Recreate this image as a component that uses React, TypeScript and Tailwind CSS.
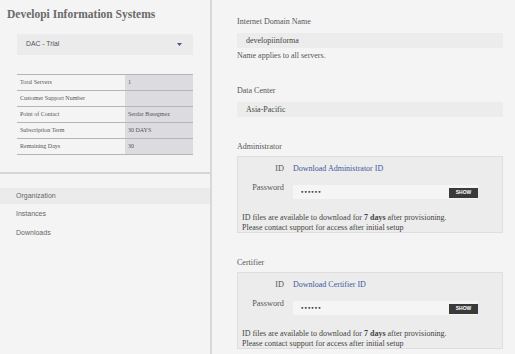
import React from 'react'

const serif = { fontFamily: '"Liberation Serif", "Times New Roman", serif' }
const sans = { fontFamily: '"Liberation Sans", Arial, sans-serif' }

const rows: [string, string][] = [
  ['Total Servers', '1'],
  ['Customer Support Number', ''],
  ['Point of Contact', 'Serdar Basegmez'],
  ['Subscription Term', '30 DAYS'],
  ['Remaining Days', '30'],
]

function Field({ label, value, note }: { label: string; value: string; note?: string }) {
  return (
    <div>
      <div className="text-[8px] leading-[10px] text-[#555]">{label}</div>
      <div className="mt-[6px] h-[15px] bg-[#ececec] pl-[9px] text-[8px] leading-[15px] text-[#444]">{value}</div>
      {note && <div className="mt-[3px] text-[8px] leading-[10px] text-[#555]">{note}</div>}
    </div>
  )
}

function IdBox({ title, link }: { title: string; link: string }) {
  return (
    <div>
      <div className="text-[8px] leading-[10px] text-[#555]">{title}</div>
      <div className="mt-[4px] h-[77px] border border-[#dedede] bg-[#ececec] pt-[6px] pl-[4px] pr-[24px]">
        <div className="flex items-center h-[12px] text-[8px]">
          <span className="w-[42px] text-right text-[8.3px] text-[#555]">ID</span>
          <span className="ml-[9px] text-[#3d5a9e]">{link}</span>
        </div>
        <div className="mt-[10px] flex items-start text-[8px]">
          <span className="-mt-[2px] w-[42px] text-right text-[8.3px] leading-[10px] text-[#555]">Password</span>
          <div className="ml-[9px] flex h-[14px] flex-1 items-center justify-between bg-[#f5f5f5] pl-[8px]">
            <span className="text-[7px] font-bold tracking-[1px] text-[#333]">••••••</span>
            <span className="mt-[2px] flex h-[10px] w-[29px] items-center justify-center bg-[#3a3a3a] text-[5px] font-bold text-white" style={sans}>SHOW</span>
          </div>
        </div>
        <div className="mt-[14px] text-[8px] leading-[10px] text-[#444]">
          ID files are available to download for <b>7 days</b> after provisioning.<br />
          Please contact support for access after initial setup
        </div>
      </div>
    </div>
  )
}

export default function App() {
  return (
    <div className="flex h-[354px] w-[515px] overflow-hidden bg-[#f4f4f4]" style={serif}>
      <aside className="w-[212px] shrink-0 border-r-2 border-[#d8d8d8]">
        <h1 className="pl-[7px] pt-[6px] text-[11.5px] font-bold leading-[16px] text-[#6a6a6a]">Developi Information Systems</h1>
        <div className="mx-[17px] mt-[12px] flex h-[21px] items-center justify-between bg-[#ebebeb] pl-[9px] pr-[11px] text-[6.8px] text-[#555]" style={sans}>
          <span>DAC - Trial</span>
          <svg width="5" height="3" viewBox="0 0 5 3"><path d="M0 0h5L2.5 3z" fill="#4a5a7a" /></svg>
        </div>
        <div className="mx-[17px] mt-[19px] border-b border-[#b5b5b5]">
          {rows.map(([k, v]) => (
            <div key={k} className="flex h-[16px] border-t border-[#b5b5b5] text-[6px] text-[#555]">
              <div className="flex w-[108px] items-center pl-[3px]">{k}</div>
              <div className="flex flex-1 items-center bg-[#dcdce0] pl-[3px]">{v}</div>
            </div>
          ))}
        </div>
        <div className="mt-[17px] h-[2px] bg-[#d6d6d6]" />
        <nav className="mt-[14px] text-[7px] text-[#666]" style={sans}>
          <div className="flex h-[16px] items-center bg-[#ebebeb] pl-[16px]">Organization</div>
          <div className="flex h-[21px] items-center pl-[16px]">Instances</div>
          <div className="flex h-[17px] items-center pl-[16px]">Downloads</div>
        </nav>
      </aside>
      <main className="flex-1 pl-[25px] pr-[12px] pt-[17px]">
        <Field label="Internet Domain Name" value="developiinforma" note="Name applies to all servers." />
        <div className="mt-[25px]">
          <Field label="Data Center" value="Asia-Pacific" />
        </div>
        <div className="mt-[25px]">
          <IdBox title="Administrator" link="Download Administrator ID" />
        </div>
        <div className="mt-[25px]">
          <IdBox title="Certifier" link="Download Certifier ID" />
        </div>
      </main>
    </div>
  )
}
